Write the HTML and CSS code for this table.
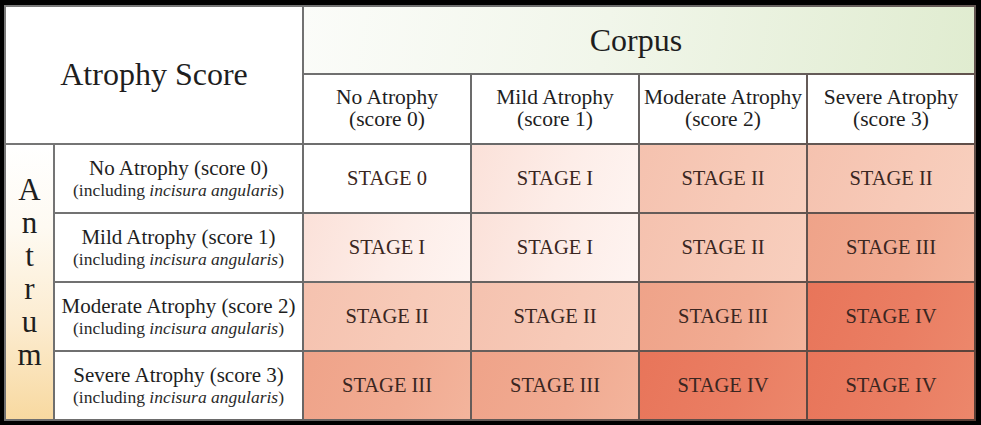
FILE: index.html
```html
<!DOCTYPE html>
<html lang="en">
<head>
<meta charset="utf-8">
<title>Atrophy Score Staging</title>
<link rel="stylesheet" href="styles.css">
</head>
<body>
<div class="frame">
  <div class="grid">
    <div class="cell score-title">Atrophy Score</div>
    <div class="cell corpus">Corpus</div>

    <div class="cell colhead">No Atrophy<br>(score 0)</div>
    <div class="cell colhead">Mild Atrophy<br>(score 1)</div>
    <div class="cell colhead">Moderate Atrophy<br>(score 2)</div>
    <div class="cell colhead">Severe Atrophy<br>(score 3)</div>

    <div class="cell antrum">
      <span>A</span><span>n</span><span>t</span><span>r</span><span>u</span><span>m</span>
    </div>

    <div class="cell rowhead"><span class="main">No Atrophy (score 0)</span><span class="sub">(including <i>incisura angularis</i>)</span></div>
    <div class="cell stage s0">STAGE 0</div>
    <div class="cell stage s1">STAGE I</div>
    <div class="cell stage s2">STAGE II</div>
    <div class="cell stage s2">STAGE II</div>

    <div class="cell rowhead"><span class="main">Mild Atrophy (score 1)</span><span class="sub">(including <i>incisura angularis</i>)</span></div>
    <div class="cell stage s1">STAGE I</div>
    <div class="cell stage s1">STAGE I</div>
    <div class="cell stage s2">STAGE II</div>
    <div class="cell stage s3">STAGE III</div>

    <div class="cell rowhead"><span class="main">Moderate Atrophy (score 2)</span><span class="sub">(including <i>incisura angularis</i>)</span></div>
    <div class="cell stage s2">STAGE II</div>
    <div class="cell stage s2">STAGE II</div>
    <div class="cell stage s3">STAGE III</div>
    <div class="cell stage s4">STAGE IV</div>

    <div class="cell rowhead"><span class="main">Severe Atrophy (score 3)</span><span class="sub">(including <i>incisura angularis</i>)</span></div>
    <div class="cell stage s3">STAGE III</div>
    <div class="cell stage s3">STAGE III</div>
    <div class="cell stage s4">STAGE IV</div>
    <div class="cell stage s4">STAGE IV</div>
  </div>
</div>
</body>
</html>
```

FILE: styles.css
```css
html, body {
  margin: 0;
  padding: 0;
  background: #000;
}

body {
  width: 981px;
  height: 425px;
  overflow: hidden;
  font-family: "Liberation Serif", "Times New Roman", serif;
  color: #1e1e1e;
}

.frame {
  padding: 5px 0 0 4px;
}

.grid {
  display: grid;
  grid-template-columns: 47px 247px 166px 166px 166px 166px;
  grid-template-rows: 66px 68px 67px 67px 67px 67px;
  gap: 2px;
  padding: 2px;
  width: max-content;
  background: linear-gradient(135deg, #7a7a7a 0%, #6a6a6a 45%, #5a3e35 100%);
}

.cell {
  background: #fff;
  display: flex;
  align-items: center;
  justify-content: center;
  text-align: center;
}

.score-title {
  grid-column: 1 / 3;
  grid-row: 1 / 3;
  font-size: 32px;
  padding-bottom: 2px;
}

.corpus {
  grid-column: 3 / 7;
  grid-row: 1;
  font-size: 32px;
  background: linear-gradient(100deg, #fbfcf9 0%, #f1f6ea 45%, #e0ecd0 100%);
  padding-right: 6px;
}

.colhead {
  font-size: 21.5px;
  line-height: 22px;
  padding-bottom: 3px;
}

.antrum {
  grid-column: 1;
  grid-row: 3 / 7;
  flex-direction: column;
  justify-content: flex-start;
  padding-top: 28px;
  font-size: 31px;
  line-height: 33px;
  background: linear-gradient(180deg, #ffffff 0%, #fefaf2 30%, #fcecd0 65%, #f8d9a0 100%);
}

.antrum span {
  display: block;
}

.rowhead {
  flex-direction: column;
  padding-bottom: 1px;
}

.rowhead .main {
  display: block;
  font-size: 21px;
  line-height: 24px;
}

.rowhead .sub {
  display: block;
  font-size: 17.5px;
  line-height: 20px;
  color: #2a2a2a;
}

.stage {
  font-size: 20.5px;
  color: #3a2621;
}

.s0 { background: #fff; }
.s1 { background: linear-gradient(110deg, #fbe1d9 0%, #fdede8 55%, #fef4f1 100%); }
.s2 { background: linear-gradient(110deg, #f5c2af 0%, #f7cab8 60%, #f8cfbe 100%); }
.s3 { background: linear-gradient(110deg, #efa389 0%, #f1ab92 60%, #f3b49c 100%); }
.s4 { background: linear-gradient(110deg, #e8755a 0%, #ea7e63 60%, #ec876b 100%); }
```
